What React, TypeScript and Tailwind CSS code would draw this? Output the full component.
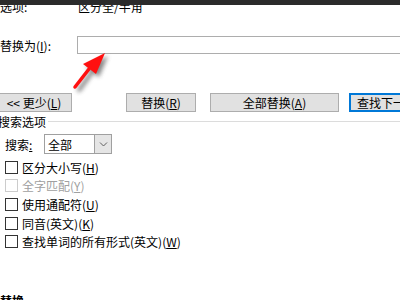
import React from "react";

const U = ({ c }: { c: string }) => <span className="underline underline-offset-1">{c}</span>;

function Check({ label, k, tail, disabled, h }: { label: string; k: string; tail?: string; disabled?: boolean; h: string }) {
  return (
    <div className={`flex items-center ${h}`}>
      <div className={`ml-[5px] h-[13px] w-[13px] shrink-0 border bg-white ${disabled ? "border-[#cccccc]" : "border-[#333333]"}`} />
      <span className={`ml-[4px] ${disabled ? "text-[#a0a0a0]" : "text-black"}`}>
        {label}({<U c={k} />}){tail}
      </span>
    </div>
  );
}

export default function App() {
  return (
    <div
      className="relative h-[300px] w-[400px] overflow-hidden bg-white text-[12px] leading-[13px] text-black"
      style={{ fontFamily: '"Noto Sans CJK SC", "Liberation Sans", sans-serif' }}
    >
      {/* row 1 */}
      <div className="flex h-[13px] items-end">
        <span className="w-[78px] shrink-0">选项:</span>
        <span className="shrink-0">区分全/半角</span>
      </div>

      {/* replace with */}
      <div className="mt-[23px] flex h-[18px] items-center">
        <span className="w-[77px] shrink-0">
          替换为(<U c="I" />):
        </span>
        <div className="h-[18px] w-[340px] shrink-0 border border-[#adadad] bg-white" />
      </div>

      {/* buttons */}
      <div className="mt-[39px] flex h-[19px]">
        <div className="ml-[-4px] flex h-[19px] w-[76px] shrink-0 items-center justify-center border border-[#adadad] bg-[#e1e1e1]">
          &lt;&lt; 更少(<U c="L" />)
        </div>
        <div className="ml-[54px] flex h-[19px] w-[70px] shrink-0 items-center justify-center border border-[#adadad] bg-[#e1e1e1]">
          替换(<U c="R" />)
        </div>
        <div className="ml-[14px] flex h-[19px] w-[129px] shrink-0 items-center justify-center border border-[#adadad] bg-[#e1e1e1]">
          全部替换(<U c="A" />)
        </div>
        <div className="ml-[10px] flex h-[19px] w-[90px] shrink-0 items-center overflow-hidden whitespace-nowrap border-2 border-[#0078d7] bg-[#e1e1e1] pl-[6px]">
          查找下一处(<U c="F" />)
        </div>
      </div>

      {/* group header */}
      <div className="mt-[2px] flex h-[14px] items-center">
        <span className="ml-[-2px] shrink-0">搜索选项</span>
        <div className="ml-[2px] h-px flex-1 bg-[#dcdcdc]" />
      </div>

      {/* search select */}
      <div className="mt-[6px] flex h-[20px] items-center">
        <span className="ml-[5px] w-[39px] shrink-0">
          搜索<U c=":" />
        </span>
        <div className="flex h-[20px] w-[68px] shrink-0 items-stretch border border-[#a0a0a0] bg-white">
          <span className="flex flex-1 items-center pl-[3px]">全部</span>
          <div className="flex w-[17px] items-center justify-center border-l border-[#a0a0a0] bg-[#e5e5e5]">
            <svg width="9" height="6" viewBox="0 0 9 6">
              <path d="M1 1.5 L4.5 5 L8 1.5" fill="none" stroke="#606060" strokeWidth="1" />
            </svg>
          </div>
        </div>
      </div>

      {/* checkboxes */}
      <div className="mt-[4px] flex flex-col">
        <Check label="区分大小写" k="H" h="h-[18px]" />
        <Check label="全字匹配" k="Y" disabled h="h-[19px]" />
        <Check label="使用通配符" k="U" h="h-[19px]" />
        <Check label="同音(英文)" k="K" h="h-[18px]" />
        <Check label="查找单词的所有形式(英文)" k="W" h="h-[18px]" />
      </div>

      <div className="mt-[44px] font-bold">替换</div>

      {/* window edge */}
      <div className="absolute left-0 top-0 h-[5px] w-full bg-[#2b2b2b]" />

      {/* red arrow annotation */}
      <svg className="absolute left-0 top-0" width="400" height="300" viewBox="0 0 400 300">
        <defs>
          <filter id="sh" x="-50%" y="-50%" width="200%" height="200%">
            <feGaussianBlur stdDeviation="2" />
          </filter>
        </defs>
        <g transform="translate(3,3)" filter="url(#sh)" fill="#555" opacity="0.7">
          <path d="M76 87 L89 69" stroke="#555" strokeWidth="4" strokeLinecap="round" />
          <path d="M105 53 L83 64 L96 74 Z" />
        </g>
        <path d="M75 87 L89 69" stroke="#ff1010" strokeWidth="3.5" strokeLinecap="round" />
        <path d="M105 53 L83 64 L96 74 Z" fill="#ff1010" />
      </svg>
    </div>
  );
}
